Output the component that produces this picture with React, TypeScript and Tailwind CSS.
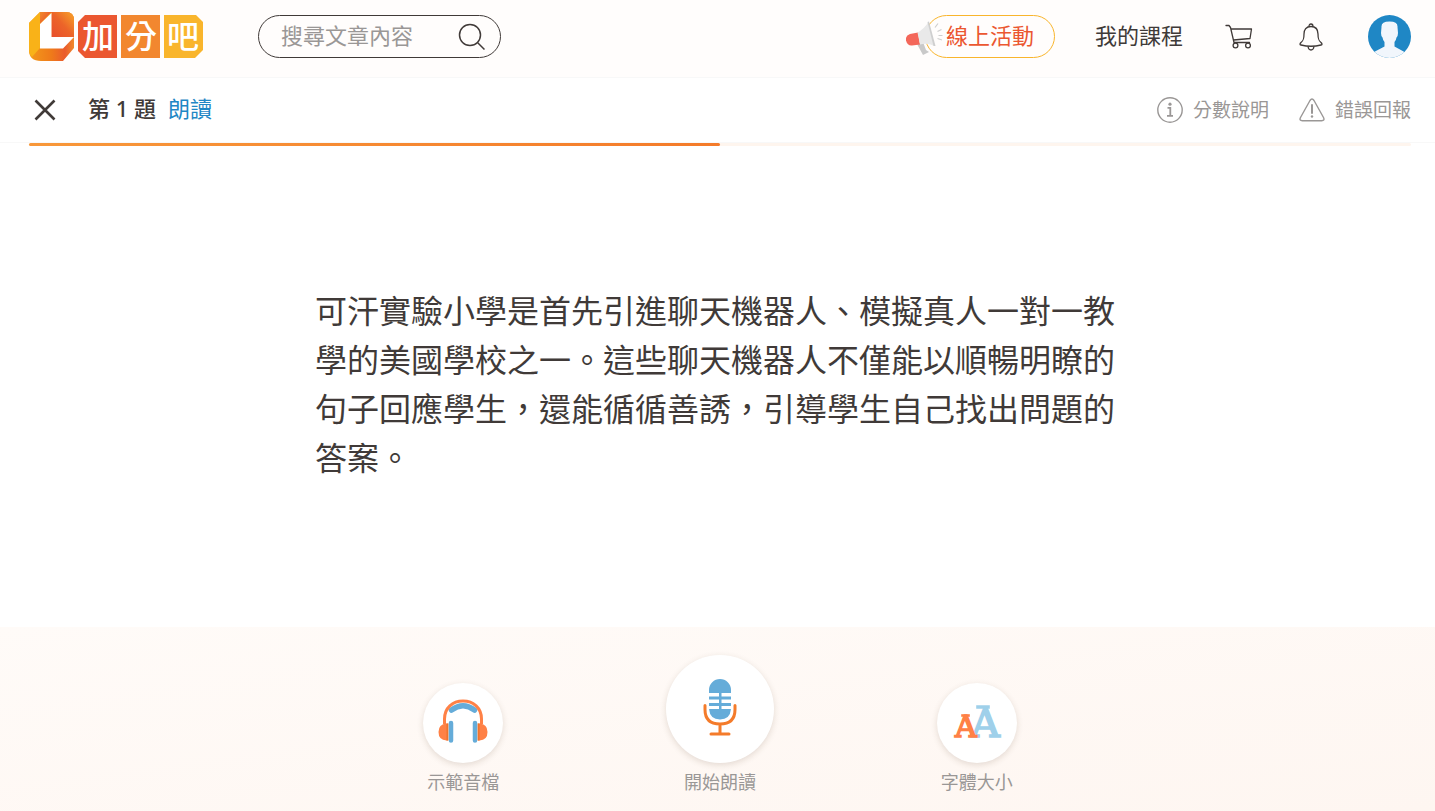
import type { ReactNode } from "react";

const passage =
  "可汗實驗小學是首先引進聊天機器人、模擬真人一對一教學的美國學校之一。這些聊天機器人不僅能以順暢明瞭的句子回應學生，還能循循善誘，引導學生自己找出問題的答案。";

function Logo() {
  return (
    <svg
      width="175"
      height="50"
      viewBox="0 0 175 50"
      role="img"
      aria-label="加分吧"
      className="overflow-visible"
    >
      <defs>
        <linearGradient id="logo-top" x1="0" y1="0" x2="1" y2="0.6">
          <stop offset="0" stopColor="#f28a28" />
          <stop offset="1" stopColor="#e84e2c" />
        </linearGradient>
        <linearGradient id="logo-inner" x1="0" y1="1" x2="1" y2="0">
          <stop offset="0" stopColor="#e84e2c" />
          <stop offset="0.5" stopColor="#ec6429" />
          <stop offset="1" stopColor="#f8a428" />
        </linearGradient>
        <linearGradient id="logo-base" x1="0" y1="0" x2="1" y2="0">
          <stop offset="0" stopColor="#f39a1a" />
          <stop offset="0.5" stopColor="#ef7a1a" />
          <stop offset="0.8" stopColor="#ea5b2c" />
          <stop offset="1" stopColor="#f08a2c" />
        </linearGradient>
      </defs>
      <path d="M11 0h26q8 0 8 8v28L34 49H12Q0 49 0 38V11z" fill="url(#logo-base)" />
      <path d="M11 0h11.500v1L11 12v24L3 45Q0 42 0 38V11z" fill="#f9b218" />
      <path d="M11 0h11.500L11 12z" fill="url(#logo-top)" />
      <path d="M22.500 0H37q8 0 8 8v17H22.500z" fill="url(#logo-inner)" />
      <path d="M22.500 1v24H45L34 36.500H11V12z" fill="#fff" />
      <path d="M56 3h32v43H56l-7-7V10z" fill="#eb5730" />
      <path d="M92 3h39v43H92z" fill="#f2872f" />
      <path d="M135 3h32l7 7v28l-8 8h-31z" fill="#f9b52c" />
      <g
        fill="#fff"
        fontSize="32"
        fontWeight="500"
        fontFamily="'Noto Sans CJK TC', sans-serif"
        textAnchor="middle"
      >
        <text x="69" y="36">加</text>
        <text x="112" y="36">分</text>
        <text x="154" y="36">吧</text>
      </g>
    </svg>
  );
}

function SearchIcon() {
  return (
    <svg width="28" height="28" viewBox="0 0 28 28" fill="none" stroke="#403a38" strokeWidth="1.500">
      <circle cx="12" cy="12" r="10.500" />
      <path d="M19.500 19.500l7 7" />
    </svg>
  );
}

function MegaphoneIcon() {
  return (
    <svg width="38" height="36" viewBox="0 0 38 36" fill="none">
      <path d="M11 24l6-2 3 8 3 2-6 3z" fill="#c9c9c9" />
      <path d="M12 12.500L4 14q-5 2-4 6.500Q1.500 26 6 25.500l8-1z" fill="#f4675a" />
      <path d="M11.500 12.500Q18 9 22.500 2l6 24Q21 22.500 14 24.500z" fill="#e9e9e9" />
      <path d="M21.500 2l1.500-.500 6.500 24.500h-2z" fill="#cfcfcf" />
      <path
        d="M29 7.500l3-4M31.500 11.500l4-2M32.500 15.500h4M31.500 18.500l4.500 1.500"
        stroke="#cfcfcf"
        strokeWidth="1.200"
      />
    </svg>
  );
}

function CartIcon() {
  return (
    <svg
      width="28"
      height="26"
      viewBox="0 0 28 26"
      fill="none"
      stroke="#403a38"
      strokeWidth="1.300"
      strokeLinejoin="round"
      strokeLinecap="round"
    >
      <path d="M1 1.500h3l1.500 2L9 18.500M5.800 5h20.700L25 14.500 8.500 16M9 18.500h15.500" />
      <circle cx="10.500" cy="21.500" r="2.400" />
      <circle cx="23" cy="21.500" r="2.400" />
    </svg>
  );
}

function BellIcon() {
  return (
    <svg width="24" height="28" viewBox="0 0 24 28" fill="none" stroke="#403a38" strokeWidth="1.300">
      <path d="M12 3.500c-5 0-7 3.500-7 7.500 0 5-.500 6.500-3 8.500q-2 2 0 2.500Q12 24.500 22 22q2-.500 0-2.500c-2.500-2-3-3.500-3-8.500 0-4-2-7.500-7-7.500z" />
      <path d="M10 3.500q0-2.500 2-2.500t2 2.500M9 23.500q.500 3.500 3 3.500t3-3.500" />
    </svg>
  );
}

function Avatar() {
  return (
    <svg width="43" height="43" viewBox="0 0 43 43">
      <defs>
        <clipPath id="avatar-clip">
          <circle cx="21.500" cy="21.500" r="21.500" />
        </clipPath>
      </defs>
      <g clipPath="url(#avatar-clip)">
        <path d="M0 0h43v43H0z" fill="#1f87c5" />
        <path
          d="M13.500 12Q13 6.500 21.500 6.500T29.500 12l.500 6q0 3-1.500 4.500-.500 3-2 4.500v4.500l10 5.500V44H6v-7l10.500-5.500V27q-1.500-1.500-2-4.500Q13 21 13 18z"
          fill="#f1f6fc"
        />
      </g>
    </svg>
  );
}

function InfoIcon() {
  return (
    <svg width="26" height="26" viewBox="0 0 26 26" fill="none" stroke="#9a9796">
      <circle cx="13" cy="13" r="12.200" strokeWidth="1.400" />
      <path d="M10.500 10.800h2.800v7.700M10 18.800h6" strokeWidth="1.800" />
      <circle cx="13" cy="7.200" r="1.600" fill="#9a9796" stroke="none" />
    </svg>
  );
}

function WarningIcon() {
  return (
    <svg width="26" height="24" viewBox="0 0 26 24" fill="none" stroke="#9a9796" strokeLinejoin="round">
      <path d="M11 2.500q2-3 4 0l9.500 17q1.500 3.200-1.800 3.200H3.300Q0 22.700 1.500 19.500z" strokeWidth="1.400" />
      <path d="M13 7v8" strokeWidth="2" strokeLinecap="round" />
      <circle cx="13" cy="18.500" r="1.200" fill="#9a9796" stroke="none" />
    </svg>
  );
}

function HeadphonesIcon() {
  return (
    <svg width="50" height="44" viewBox="0 0 50 44" fill="none">
      <path d="M13.500 11Q25 2.500 36.500 11" stroke="#65acd9" strokeWidth="5.500" strokeLinecap="round" />
      <path d="M6.500 25v-5C6.500 9 14.500 2 25 2s18.500 7 18.500 18v5" stroke="#ff8146" strokeWidth="3" />
      <path d="M10 24.500v17H8.500Q.500 41 .500 33t8-8.500zM40 24.500v17h1.500q8-.500 8-8.500t-8-8.500z" fill="#ff8146" />
      <path d="M8.500 24.500h2v17h-2zM39.500 24.500h2v17h-2z" fill="#f0742c" />
      <path d="M13 24v17.500M37 24v17.500" stroke="#65acd9" strokeWidth="4.500" strokeLinecap="round" />
    </svg>
  );
}

function MicIcon() {
  return (
    <svg width="34" height="57" viewBox="0 0 34 57" fill="none">
      <path d="M6 14v-3a11 11 0 0 1 22 0v3zM6 30h22q-1 10.500-11 10.500T6 30z" fill="#65acd9" />
      <path d="M6 17.500h22v3H6zM6 24h22v3H6zM16 13h2.500v18H16z" fill="#65acd9" />
      <path
        d="M2 26.500v4q0 14.500 15 14.500t15-14.500v-4M17 45v9M8 55h18"
        stroke="#f47b2a"
        strokeWidth="3"
        strokeLinecap="round"
      />
    </svg>
  );
}

function FontSizeIcon() {
  return (
    <svg
      width="46"
      height="36"
      viewBox="0 0 46 36"
      fontFamily="'DejaVu Serif', serif"
      className="overflow-visible"
    >
      <g fill="#9fd0ea" stroke="#9fd0ea" strokeWidth="1.600">
        <text x="17" y="34" fontSize="40">A</text>
        <path d="M23 3h12v2H23z" />
      </g>
      <g fill="#ff8146" stroke="#ff8146" strokeWidth="1.600">
        <text x="1" y="34" fontSize="30">A</text>
        <path d="M8 12h7v1H8z" />
      </g>
    </svg>
  );
}

function ToolButton({ label, large, children }: { label: string; large?: boolean; children: ReactNode }) {
  return (
    <button type="button" className="flex flex-col items-center gap-1.5">
      <span
        className={`flex items-center justify-center rounded-full bg-white pb-1 shadow-[0_2px_6px_rgba(90,60,40,0.16)] ${
          large ? "size-[108px]" : "size-20"
        }`}
      >
        {children}
      </span>
      <span className="text-lg leading-[27px] text-[#9a9796]">{label}</span>
    </button>
  );
}

export default function App() {
  return (
    <div className="flex min-h-screen flex-col bg-white font-['Noto_Sans','Noto_Sans_CJK_TC',sans-serif] text-[#403a38]">
      <header className="flex items-start justify-between border-b border-[#f8f8f8] bg-[#fffdfc] pt-[15px] pr-6 pb-[19px] pl-[29px]">
        <div className="flex h-[43px] items-center gap-[54px]">
          <a href="#">
            <Logo />
          </a>
          <form className="flex h-[43px] w-[243px] items-center justify-between rounded-full border border-[#403a38] pr-3.5 pl-[22px]">
            <input
              type="text"
              aria-label="搜尋文章內容"
              placeholder="搜尋文章內容"
              className="w-[140px] bg-transparent pb-1 text-[22px] leading-8 outline-none placeholder:text-[#9a9796]"
            />
            <button type="button" aria-label="搜尋">
              <SearchIcon />
            </button>
          </form>
        </div>
        <nav className="flex h-[43px] items-center text-[22px] leading-8">
          <a
            href="#"
            className="relative mr-10 flex h-[43px] items-center rounded-full border border-[#f9b52c] px-5 pb-1 text-[#eb5730]"
          >
            <span className="absolute top-1 -left-5">
              <MegaphoneIcon />
            </span>
            線上活動
          </a>
          <a href="#" className="mr-[42px] pb-1">
            我的課程
          </a>
          <a href="#" aria-label="購物車" className="mr-[46px]">
            <CartIcon />
          </a>
          <button type="button" aria-label="通知" className="mr-[45px]">
            <BellIcon />
          </button>
          <button type="button" aria-label="帳號">
            <Avatar />
          </button>
        </nav>
      </header>

      <div className="flex h-[65px] items-center justify-between border-b border-[#f8f8f8] pr-6 pl-[29px]">
        <div className="flex items-center text-[22px] leading-8">
          <button type="button" aria-label="關閉" className="mr-[27px] p-1">
            <svg width="24" height="24" viewBox="0 0 24 24" stroke="#403a38" strokeWidth="2.600">
              <path d="M2.500 2.500l19 19M21.500 2.500l-19 19" />
            </svg>
          </button>
          <h1 className="mr-3 pb-1 font-medium">第 1 題</h1>
          <span className="pb-1 text-[#1f87c5]">朗讀</span>
        </div>
        <div className="flex items-center gap-[30px] text-[19px] leading-7 text-[#9a9796]">
          <button type="button" className="flex items-center gap-2.5">
            <InfoIcon />
            分數說明
          </button>
          <button type="button" className="flex items-center gap-2.5">
            <WarningIcon />
            錯誤回報
          </button>
        </div>
      </div>
      <div className="mr-6 ml-[29px] h-[3px] rounded-full bg-[#fef5ee]">
        <div className="h-full w-1/2 rounded-full bg-linear-to-r from-[#f8983a] to-[#f47b2a]" />
      </div>

      <main className="flex flex-1 items-center justify-center pt-10 pr-6 pb-[45px] pl-[29px]">
        <p className="max-w-[810px] text-[32px] leading-[49px]">{passage}</p>
      </main>

      <footer className="bg-linear-to-br from-[#fffbf8] to-[#fef6f1] pt-7 pr-6 pb-[15px] pl-[29px]">
        <div className="mx-auto grid max-w-[770px] grid-cols-3 items-end justify-items-center">
          <ToolButton label="示範音檔">
            <HeadphonesIcon />
          </ToolButton>
          <ToolButton label="開始朗讀" large>
            <MicIcon />
          </ToolButton>
          <ToolButton label="字體大小">
            <FontSizeIcon />
          </ToolButton>
        </div>
      </footer>
    </div>
  );
}
